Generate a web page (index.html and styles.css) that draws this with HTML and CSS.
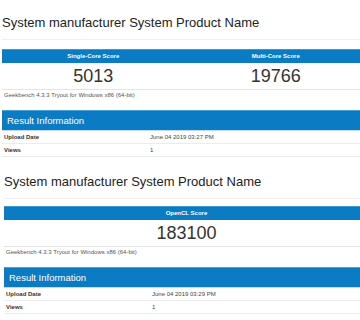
FILE: index.html
```html
<!DOCTYPE html>
<html>
<head>
<meta charset="utf-8">
<link rel="stylesheet" href="styles.css">
</head>
<body>
<div class="page">
  <section class="shot shot-a">
    <h1 class="title">System manufacturer System Product Name</h1>
    <div class="scores">
      <div class="score-col">
        <div class="score-head">Single-Core Score</div>
        <div class="score-val">5013</div>
      </div>
      <div class="score-col">
        <div class="score-head">Multi-Core Score</div>
        <div class="score-val">19766</div>
      </div>
    </div>
    <div class="note">Geekbench 4.3.3 Tryout for Windows x86 (64-bit)</div>
    <div class="info-head">Result Information</div>
    <div class="info-row"><span class="label">Upload Date</span><span class="value">June 04 2019 03:27 PM</span></div>
    <div class="info-row"><span class="label">Views</span><span class="value">1</span></div>
  </section>
  <section class="shot shot-b">
    <h1 class="title">System manufacturer System Product Name</h1>
    <div class="scores">
      <div class="score-col">
        <div class="score-head">OpenCL Score</div>
        <div class="score-val">183100</div>
      </div>
    </div>
    <div class="note">Geekbench 4.3.3 Tryout for Windows x86 (64-bit)</div>
    <div class="info-head">Result Information</div>
    <div class="info-row"><span class="label">Upload Date</span><span class="value">June 04 2019 03:29 PM</span></div>
    <div class="info-row"><span class="label">Views</span><span class="value">1</span></div>
  </section>
</div>
</body>
</html>
```
FILE: styles.css
```css
html, body {
  margin: 0;
  padding: 0;
  background: #fff;
  overflow: hidden;
}
body {
  width: 360px;
  height: 320px;
  font-family: "Liberation Sans", Arial, sans-serif;
  color: #333;
}
.page {
  display: flex;
  flex-direction: column;
}
.shot {
  width: 365px;
}
.shot-a {
  padding-left: 2px;
}
.shot-b {
  padding-left: 4px;
  margin-top: 1px;
}
.title {
  margin: 0;
  font-weight: normal;
  font-size: 13px;
  line-height: 16px;
  color: #222;
  padding-top: 15px;
  padding-bottom: 8px;
  border-bottom: 1px solid #f0f0f0;
  margin-bottom: 9px;
  white-space: nowrap;
}
.shot-b .title {
  padding-top: 16px;
  margin-bottom: 7px;
}
.scores {
  display: flex;
  border-bottom: 1px solid #e4e4e4;
}
.score-col {
  flex: 1;
  display: flex;
  flex-direction: column;
}
.score-head {
  background: #0b7cc3;
  color: #fff;
  font-weight: bold;
  font-size: 6px;
  height: 13px;
  line-height: 13px;
  text-align: center;
  border-top: 1px solid #3f97d0;
}
.score-val {
  height: 26px;
  line-height: 26px;
  font-size: 18px;
  text-align: center;
  color: #333;
}
.note {
  font-size: 6px;
  line-height: 10px;
  padding-left: 2px;
  color: #555;
  margin-bottom: 10px;
}
.shot-b .note {
  margin-bottom: 10px;
}
.info-head {
  background: #0b7cc3;
  color: #fff;
  font-size: 9.5px;
  height: 19px;
  line-height: 19px;
  padding-left: 5px;
  border-top: 1px solid #4a9fd6;
  border-bottom: 1px solid #bcdcf0;
}
.info-row {
  display: flex;
  height: 12px;
  line-height: 12px;
  font-size: 6px;
  border-bottom: 1px solid #ececec;
}
.label {
  width: 146px;
  padding-left: 2px;
  font-weight: bold;
  color: #333;
}
.value {
  color: #444;
}
```
